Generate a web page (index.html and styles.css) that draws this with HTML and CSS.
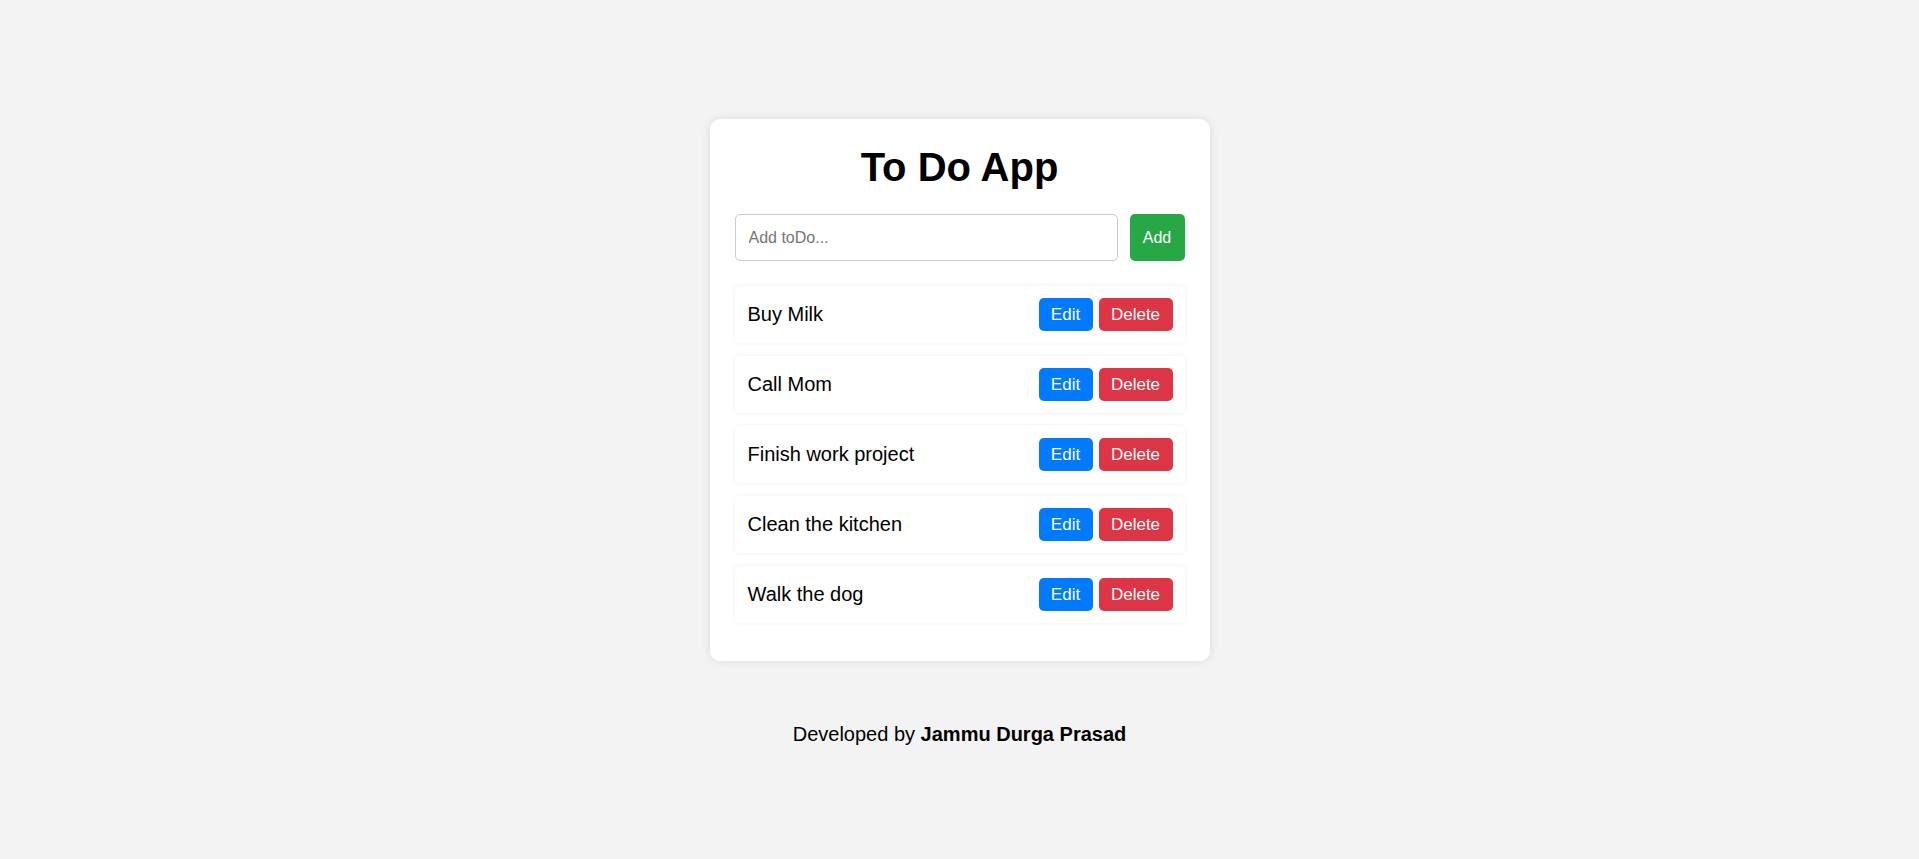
FILE: index.html
```html
<!DOCTYPE html>
<html lang="en">
<head>
<meta charset="utf-8">
<title>To Do App</title>
<link rel="stylesheet" href="styles.css">
</head>
<body>
<main class="page">
  <section class="card">
    <h1 class="title">To Do App</h1>
    <div class="input-row">
      <input class="todo-input" type="text" placeholder="Add toDo...">
      <button class="btn btn-add">Add</button>
    </div>
    <ul class="todo-list">
      <li class="todo-item"><span class="todo-text">Buy Milk</span><div class="actions"><button class="btn btn-edit">Edit</button><button class="btn btn-delete">Delete</button></div></li>
      <li class="todo-item"><span class="todo-text">Call Mom</span><div class="actions"><button class="btn btn-edit">Edit</button><button class="btn btn-delete">Delete</button></div></li>
      <li class="todo-item"><span class="todo-text">Finish work project</span><div class="actions"><button class="btn btn-edit">Edit</button><button class="btn btn-delete">Delete</button></div></li>
      <li class="todo-item"><span class="todo-text">Clean the kitchen</span><div class="actions"><button class="btn btn-edit">Edit</button><button class="btn btn-delete">Delete</button></div></li>
      <li class="todo-item"><span class="todo-text">Walk the dog</span><div class="actions"><button class="btn btn-edit">Edit</button><button class="btn btn-delete">Delete</button></div></li>
    </ul>
  </section>
  <footer class="footer">Developed by <strong>Jammu Durga Prasad</strong></footer>
</main>
</body>
</html>
```
FILE: styles.css
```css
html, body {
  margin: 0;
  padding: 0;
}
body {
  background: #f3f3f3;
  font-family: "Liberation Sans", Arial, sans-serif;
  color: #000;
}
.page {
  display: flex;
  flex-direction: column;
  align-items: center;
  padding-top: 119px;
}
.card {
  box-sizing: border-box;
  width: 500px;
  background: #fff;
  border-radius: 10px;
  box-shadow: 0 0 10px rgba(0, 0, 0, 0.1);
  padding: 25px 25px 25px;
}
.title {
  margin: 0 0 24px;
  font-size: 40px;
  font-weight: bold;
  text-align: center;
  line-height: 46px;
}
.input-row {
  display: flex;
  gap: 12px;
  margin-bottom: 25px;
}
.todo-input {
  flex: 1;
  box-sizing: border-box;
  height: 47px;
  padding: 0 13px;
  border: 1px solid #ccc;
  border-radius: 5px;
  font-family: "Liberation Sans", Arial, sans-serif;
  font-size: 16px;
  color: #000;
  outline: none;
}
.todo-input::placeholder {
  color: #757575;
}
.btn {
  border: none;
  border-radius: 5px;
  color: #fff;
  font-family: "Liberation Sans", Arial, sans-serif;
  font-size: 16px;
  cursor: pointer;
  padding: 0;
}
.btn-add {
  width: 55px;
  height: 47px;
  background: #28a745;
}
.todo-list {
  list-style: none;
  margin: 0;
  padding: 0;
}
.todo-item {
  display: flex;
  align-items: center;
  justify-content: space-between;
  height: 57px;
  box-sizing: border-box;
  padding: 12px 12px 12px 13px;
  margin-bottom: 13px;
  background: #fff;
  border-radius: 5px;
  box-shadow: 0 0 5px rgba(0, 0, 0, 0.07);
}
.todo-text {
  font-size: 20px;
}
.actions {
  display: flex;
  gap: 6px;
}
.btn-edit {
  width: 54px;
  height: 33px;
  background: #007bff;
  font-size: 17px;
}
.btn-delete {
  width: 74px;
  height: 33px;
  background: #dc3545;
  font-size: 17px;
}
.footer {
  margin-top: 62px;
  font-size: 20px;
  line-height: 23px;
}
```
